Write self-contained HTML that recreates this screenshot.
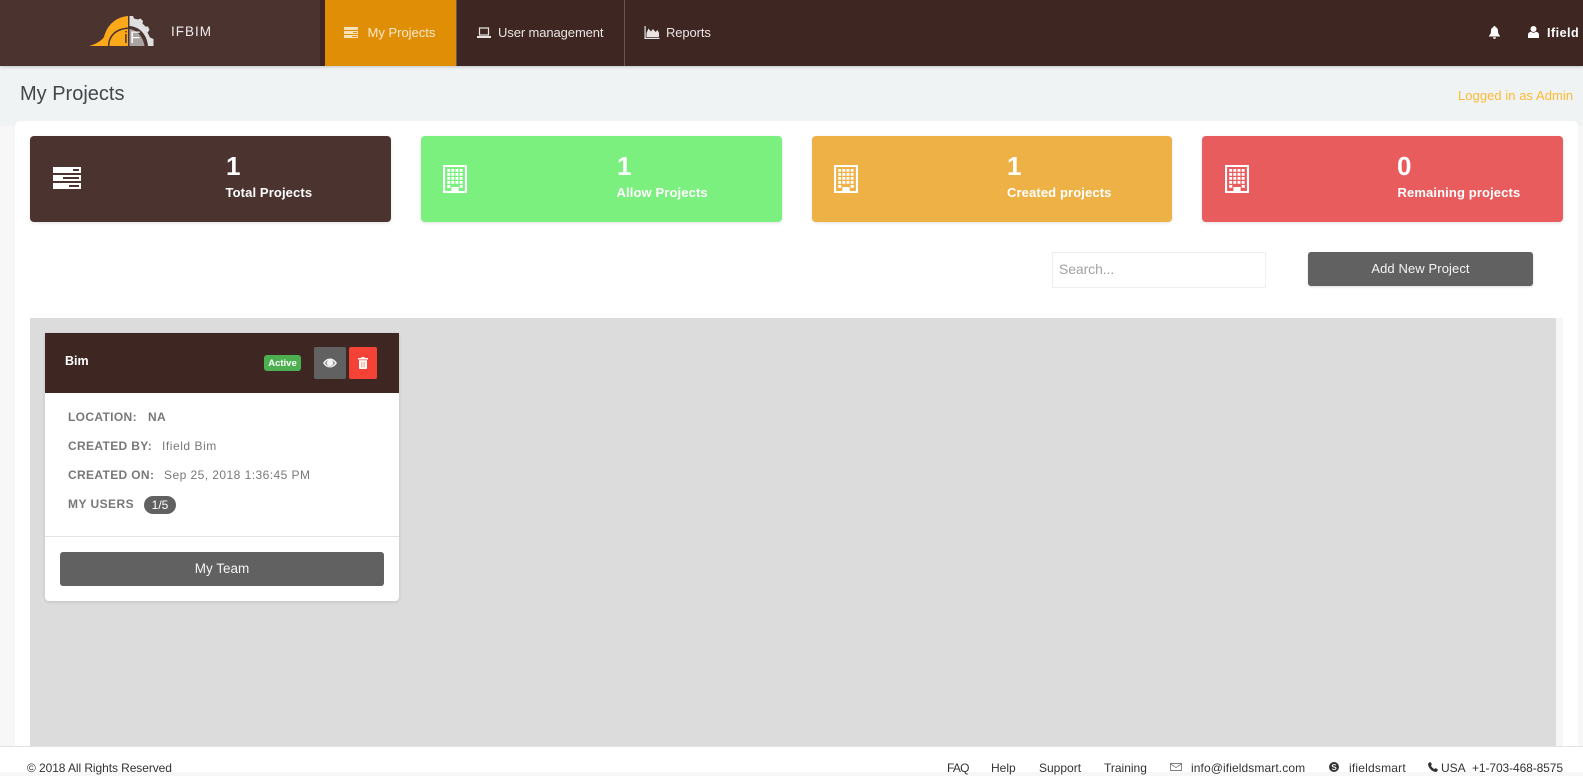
<!DOCTYPE html>
<html><head><meta charset="utf-8"><title>My Projects</title>
<style>
html,body{margin:0;padding:0;width:1583px;height:772px;overflow:hidden;background:#f7f7f7;font-family:"Liberation Sans",Arial,sans-serif}
.a{position:absolute}
.t{position:absolute;white-space:nowrap}
svg{position:absolute;display:block}
.stat{position:absolute;top:136px;width:361px;height:86px;border-radius:4px;box-shadow:0 1px 3px rgba(0,0,0,.12)}
.num{color:#fff;font-weight:bold;font-size:26px;line-height:30px}
.lab{color:#fff;font-weight:bold;font-size:13px;line-height:18px;letter-spacing:.12px}
.row{color:#787878;font-size:12px;line-height:16px;letter-spacing:.35px}
.row b{font-weight:bold}
.nav{color:#e9e4e2;font-size:13px;line-height:18px}
.f{color:#333;font-size:12px;line-height:16px;top:760px}
</style></head><body>
<div class="a" style="left:0;top:66px;width:1583px;height:60px;background:#f0f3f4"></div>
<div class="a" style="left:0;top:0;width:1583px;height:66px;background:#3e2723;box-shadow:0 1px 3px rgba(0,0,0,.2)"></div>
<div class="a" style="left:0;top:0;width:320px;height:66px;background:#4b332f"></div>
<div class="a" style="left:325px;top:0;width:131px;height:66px;background:#df8e06"></div>
<div class="a" style="left:456px;top:0;width:1px;height:66px;background:#6b5350"></div>
<div class="a" style="left:624px;top:0;width:1px;height:66px;background:#6b5350"></div>

<svg style="left:88px;top:15px" width="68" height="32" viewBox="0 0 68 32">
<path d="M1 31C8 29 13 26 16 22C19 10 28 2 40 1V31Z" fill="#fba81b"/>
<path d="M20 31C20 20 28 13 40 12.500V14C29 14.500 21.500 21 21.500 31Z" fill="#4b332f"/>
<path d="M41 1H45L46 3.500L50 4.500L52.500 3.500L55 6L54.500 8.500L57.500 11.500L60 11.500L61.500 15L59.500 17.500L62 22.500L65.500 24V31H41Z" fill="#dfe0df"/>
<path d="M41 11C52 11.500 59 20 60 31H41Z" fill="#4b332f"/>
<path d="M41 14C49 14.500 55 22 56.500 31H41Z" fill="#a9a3a1"/>
<rect x="40" y="1" width="1.500" height="30" fill="#4b332f"/>
</svg>
<div class="t" style="left:124px;top:30px;font-size:17px;line-height:16px;color:#4b332f">i</div>
<div class="t" style="left:130px;top:30px;font-size:17px;line-height:16px;color:#f6f6f6">F</div>
<div class="t" style="left:171px;top:23px;font-size:13.500px;line-height:18px;color:#f1eeed;letter-spacing:1px">IFBIM</div>

<svg style="left:344px;top:27px" width="14" height="11" viewBox="0 0 14 11"><g fill="#fbe3b8"><rect width="14" height="3"/><rect y="4" width="14" height="3"/><rect y="8" width="14" height="3"/></g><g fill="#df8e06"><rect x="9" y="5" width="4" height="1"/><rect x="8" y="9" width="5" height="1"/></g></svg>
<div class="t nav" style="left:367.500px;top:24px;color:#fbe9cd">My Projects</div>
<svg style="left:477px;top:27px" width="14" height="11" viewBox="0 0 14 11"><path d="M2.500 1h9v7h-9z" fill="none" stroke="#e9e4e2" stroke-width="1.200"/><rect x="0" y="9" width="14" height="2" fill="#e9e4e2"/></svg>
<div class="t nav" style="left:498px;top:24px;letter-spacing:-.1px">User management</div>
<svg style="left:644px;top:26px" width="16" height="13" viewBox="0 0 15 13"><path d="M.6 0V12.400H15" fill="none" stroke="#dfe4ee" stroke-width="1.200"/><path d="M2 11V7L4 2.500L6.500 5.500L8.500 3L11 6L13 4L14.500 7V11Z" fill="#e9e4e2"/></svg>
<div class="t nav" style="left:666px;top:24px;letter-spacing:-.1px">Reports</div>

<svg style="left:1489px;top:26px" width="11" height="13" viewBox="0 0 11 13"><path d="M5.500 0C6.300 0 6.600.6 6.600 1.200C8.500 1.700 9 3.200 9 5C9 7.500 9.800 8.600 11 9.800V10.500H0V9.800C1.200 8.600 2 7.500 2 5C2 3.200 2.500 1.700 4.400 1.200C4.400.6 4.700 0 5.500 0ZM4 11.300H7C7 12.200 6.300 13 5.500 13C4.700 13 4 12.200 4 11.300Z" fill="#fff"/></svg>
<svg style="left:1528px;top:26px" width="11" height="12" viewBox="0 0 11 12"><circle cx="5.500" cy="3" r="3" fill="#fff"/><path d="M0 12V9C0 7 1.500 6 3 5.800C4.500 7 6.500 7 8 5.800C9.500 6 11 7 11 9V12Z" fill="#fff"/></svg>
<div class="t" style="left:1547px;top:24px;color:#fff;font-size:12.500px;line-height:18px;font-weight:bold;letter-spacing:.5px">Ifield</div>

<div class="t" style="left:20px;top:81px;font-size:20px;line-height:26px;color:#44474a">My Projects</div>
<div class="t" style="left:1458px;top:87px;font-size:13px;line-height:18px;color:#fdb933;letter-spacing:.05px">Logged in as Admin</div>

<div class="a" style="left:15px;top:121px;width:1563px;height:640px;background:#fff;border-radius:5px 5px 0 0"></div>
<div class="a" style="left:1556px;top:318px;width:7px;height:430px;background:#f6f6f6"></div>

<div class="stat" style="left:30px;background:#4b332f"></div>
<div class="stat" style="left:421px;background:#7bf07f"></div>
<div class="stat" style="left:812px;width:360px;background:#eeb145"></div>
<div class="stat" style="left:1202px;background:#e85c5e"></div>

<svg style="left:53px;top:167px" width="28" height="22" viewBox="0 0 28 22"><g fill="#fff"><rect width="28" height="6"/><rect y="8" width="28" height="6"/><rect y="16" width="28" height="6"/></g><g fill="#4b332f"><rect x="20" y="2" width="6" height="2"/><rect x="10" y="10" width="16" height="2"/><rect x="16" y="18" width="10" height="2"/></g></svg>
<svg width="0" height="0" style="position:absolute"><defs>
<pattern id="w" x="4" y="4" width="4" height="4" patternUnits="userSpaceOnUse"><rect width="2.800" height="2.800" fill="#fff"/></pattern>
</defs></svg>
<svg style="left:443px;top:165px" width="24" height="28" viewBox="0 0 23 28" preserveAspectRatio="none"><rect x="1" y="1" width="21" height="26" fill="none" stroke="#fff" stroke-width="2"/><rect x="4" y="4" width="15" height="15" fill="url(#w)"/><rect x="4" y="20" width="3" height="2.800" fill="#fff"/><rect x="16" y="20" width="3" height="2.800" fill="#fff"/><rect x="8" y="22" width="7" height="5" fill="#fff"/></svg>
<svg style="left:834px;top:165px" width="24" height="28" viewBox="0 0 23 28" preserveAspectRatio="none"><rect x="1" y="1" width="21" height="26" fill="none" stroke="#fff" stroke-width="2"/><rect x="4" y="4" width="15" height="15" fill="url(#w)"/><rect x="4" y="20" width="3" height="2.800" fill="#fff"/><rect x="16" y="20" width="3" height="2.800" fill="#fff"/><rect x="8" y="22" width="7" height="5" fill="#fff"/></svg>
<svg style="left:1225px;top:165px" width="24" height="28" viewBox="0 0 23 28" preserveAspectRatio="none"><rect x="1" y="1" width="21" height="26" fill="none" stroke="#fff" stroke-width="2"/><rect x="4" y="4" width="15" height="15" fill="url(#w)"/><rect x="4" y="20" width="3" height="2.800" fill="#fff"/><rect x="16" y="20" width="3" height="2.800" fill="#fff"/><rect x="8" y="22" width="7" height="5" fill="#fff"/></svg>

<div class="t num" style="left:226px;top:151px">1</div>
<div class="t lab" style="left:225.500px;top:184px">Total Projects</div>
<div class="t num" style="left:617px;top:151px">1</div>
<div class="t lab" style="left:616.500px;top:184px">Allow Projects</div>
<div class="t num" style="left:1007px;top:151px">1</div>
<div class="t lab" style="left:1007px;top:184px">Created projects</div>
<div class="t num" style="left:1397px;top:151px">0</div>
<div class="t lab" style="left:1397.500px;top:184px">Remaining projects</div>

<div class="a" style="left:1052px;top:252px;width:212px;height:34px;border:1px solid #eceeef;background:#fff"></div>
<div class="t" style="left:1059px;top:260px;font-size:14px;line-height:18px;color:#a2a2a2;letter-spacing:-.1px">Search...</div>
<div class="a" style="left:1308px;top:252px;width:225px;height:34px;background:#616161;border-radius:3px;box-shadow:0 1px 2px rgba(0,0,0,.15)"></div>
<div class="t" style="left:1308px;width:225px;text-align:center;top:260px;font-size:13px;line-height:18px;color:#f4f4f4;letter-spacing:.1px">Add New Project</div>

<div class="a" style="left:30px;top:318px;width:1526px;height:429px;background:#dcdcdc"></div>

<div class="a" style="left:45px;top:333px;width:354px;height:268px;background:#fff;border-radius:0 0 4px 4px;box-shadow:0 1px 3px rgba(0,0,0,.12)"></div>
<div class="a" style="left:45px;top:333px;width:354px;height:60px;background:#3e2723"></div>
<div class="t" style="left:65px;top:352px;color:#fff;font-weight:bold;font-size:12.500px;line-height:18px">Bim</div>
<div class="a" style="left:264px;top:355px;width:37px;height:16px;background:#4caf50;border-radius:3px"></div>
<div class="t" style="left:264px;width:37px;text-align:center;top:356px;color:#fff;font-weight:bold;font-size:9.500px;line-height:15px">Active</div>
<div class="a" style="left:314px;top:347px;width:32px;height:32px;background:#616161;border-radius:2px"></div>
<svg style="left:323px;top:358px" width="14" height="10" viewBox="0 0 14 10"><path d="M0 5C2 2 4.300.5 7 .5C9.700.5 12 2 14 5C12 8 9.700 9.500 7 9.500C4.300 9.500 2 8 0 5Z" fill="#f4f4f4"/><path d="M1.700 5C3.200 3 4.500 2.300 5 2.200C4.300 3 4 4 4 5C4 7 5.300 8 7 8C8.700 8 10 7 10 5C10 4 9.700 3 9 2.200C10 2.500 11 3.500 12.300 5C10.800 7 9 8.500 7 8.500C5 8.500 3.200 7 1.700 5Z" fill="#9a9a9a"/></svg>
<div class="a" style="left:349px;top:347px;width:28px;height:32px;background:#f44336;border-radius:2px"></div>
<svg style="left:358px;top:357px" width="10" height="12" viewBox="0 0 10 12"><path d="M3.500 0H6.500L7 1H10V2.500H0V1H3ZM1 3.300H9V11C9 11.600 8.600 12 8 12H2C1.400 12 1 11.600 1 11Z" fill="#fff"/><path d="M3 5H3.800V10.500H3ZM4.600 5H5.400V10.500H4.600ZM6.200 5H7V10.500H6.200Z" fill="#f8a58f"/></svg>

<div class="t row" style="left:68px;top:409px"><b>LOCATION:</b></div><div class="t row" style="left:148px;top:409px"><b>NA</b></div>
<div class="t row" style="left:68px;top:438px"><b>CREATED BY:</b></div><div class="t row" style="left:162px;top:438px;letter-spacing:.55px">Ifield Bim</div>
<div class="t row" style="left:68px;top:467px"><b>CREATED ON:</b></div><div class="t row" style="left:164px;top:467px;letter-spacing:.45px">Sep 25, 2018 1:36:45 PM</div>
<div class="t row" style="left:68px;top:496px;letter-spacing:.45px"><b>MY USERS</b></div>
<div class="a" style="left:144px;top:496px;width:32px;height:18px;background:#616161;border-radius:9px"></div>
<div class="t" style="left:144px;width:32px;text-align:center;top:496px;color:#fff;font-size:12px;line-height:18px">1/5</div>
<div class="a" style="left:45px;top:536px;width:354px;height:1px;background:#e3e3e3"></div>
<div class="a" style="left:60px;top:552px;width:324px;height:34px;background:#616161;border-radius:3px"></div>
<div class="t" style="left:60px;width:324px;text-align:center;top:560px;font-size:13.500px;line-height:18px;color:#f4f4f4">My Team</div>

<div class="a" style="left:0;top:746px;width:1583px;height:26px;background:#fff;border-top:1px solid #e2e2e2;box-sizing:border-box"></div>
<div class="t f" style="left:27px;letter-spacing:-.08px">© 2018 All Rights Reserved</div>
<div class="t f" style="left:947px;letter-spacing:-.8px">FAQ</div>
<div class="t f" style="left:991px">Help</div>
<div class="t f" style="left:1039px">Support</div>
<div class="t f" style="left:1104px">Training</div>
<svg style="left:1170px;top:763px" width="12" height="8" viewBox="0 0 12 8"><path d="M.5.500H11.500V7.500H.5ZM.5 1L6 4.500L11.500 1" fill="none" stroke="#555" stroke-width=".7"/></svg>
<div class="t f" style="left:1191px;letter-spacing:.1px">info@ifieldsmart.com</div>
<svg style="left:1329px;top:762px" width="10" height="10" viewBox="0 0 10 10"><circle cx="5" cy="5" r="5" fill="#333"/><path d="M7 3.300C6 2.300 3.200 2.500 3.200 3.800C3.200 5.300 7 4.700 7 6.300C7 7.700 4 7.800 3 6.700" fill="none" stroke="#fff" stroke-width="1"/></svg>
<div class="t f" style="left:1349px;letter-spacing:.2px">ifieldsmart</div>
<svg style="left:1428px;top:762px" width="10" height="10" viewBox="0 0 10 10"><path d="M2.300 0L4 2.300L3 3.500C3.500 5 5 6.500 6.500 7L7.700 6L10 7.700C9.500 9.200 8.500 10 7.500 10C4 9.500.5 6 0 2.500C0 1.500.8.500 2.300 0Z" fill="#333"/></svg>
<div class="t f" style="left:1441px">USA</div>
<div class="t f" style="left:1472px;letter-spacing:-.1px">+1-703-468-8575</div>
</body></html>
